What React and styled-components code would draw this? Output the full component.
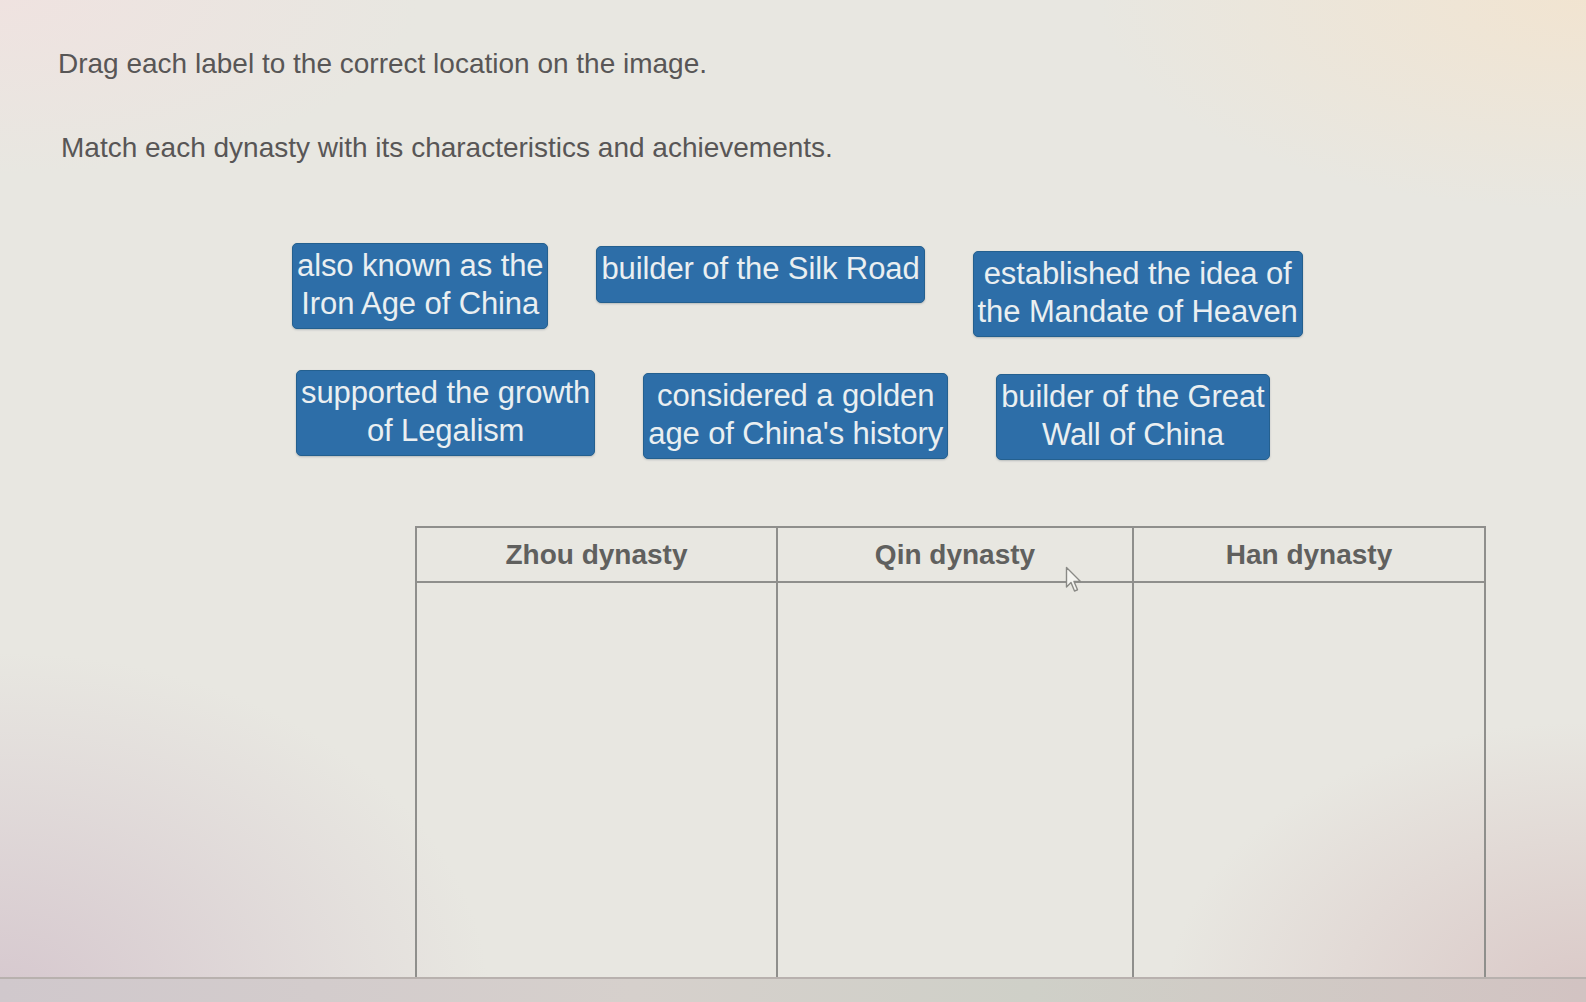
import React from "react";
import styled, { createGlobalStyle } from "styled-components";

const GlobalStyle = createGlobalStyle`
  html, body {
    margin: 0;
    padding: 0;
  }
  body {
    font-family: "Liberation Sans", Arial, sans-serif;
    background: #e8e6e0;
    overflow: hidden;
  }
`;

const Screen = styled.div`
  width: 1586px;
  height: 1002px;
  display: flex;
  flex-direction: column;
  background:
    radial-gradient(ellipse 700px 500px at 0% 100%, rgba(212, 196, 204, 0.9), rgba(212, 196, 204, 0) 70%),
    radial-gradient(ellipse 600px 400px at 100% 100%, rgba(214, 192, 192, 0.8), rgba(214, 192, 192, 0) 70%),
    radial-gradient(ellipse 700px 300px at 100% 0%, rgba(242, 228, 208, 0.95), rgba(242, 228, 208, 0) 70%),
    radial-gradient(ellipse 600px 250px at 0% 0%, rgba(240, 226, 224, 0.9), rgba(240, 226, 224, 0) 70%),
    #e8e7e1;
`;

const Page = styled.main`
  position: relative;
  height: 979px;
  flex: 0 0 979px;
  overflow: hidden;
  border-bottom: 2px solid #b8b1ae;
  box-sizing: border-box;
`;

const Prompt = styled.p`
  margin: ${(p) => p.$top}px 0 0;
  padding-left: ${(p) => p.$left}px;
  font-size: 28px;
  line-height: 31px;
  color: #585656;
`;

const LabelRow = styled.div`
  display: flex;
  align-items: flex-start;
  gap: 48px;
  margin-top: ${(p) => p.$top}px;
  padding-left: ${(p) => p.$left}px;
`;

const Label = styled.div`
  box-sizing: border-box;
  min-height: ${(p) => p.$minHeight || 0}px;
  margin-top: ${(p) => p.$shift || 0}px;
  padding: 3px 4px 5px;
  background: #2d6ea8;
  border: 1px solid #24608f;
  border-radius: 5px;
  color: #eaeff1;
  font-size: 31px;
  line-height: 38px;
  letter-spacing: -0.1px;
  text-align: center;
  white-space: pre-line;
  box-shadow: 0 1px 2px rgba(40, 60, 80, 0.25);
`;

const Board = styled.div`
  margin: 66px 0 0 415px;
  width: 1071px;
  display: grid;
  grid-template-columns: 361px 356px 1fr;
  grid-template-rows: 55px 520px;
  border-top: 2px solid #8f8f8c;
  border-left: 2px solid #8f8f8c;
  box-sizing: border-box;
`;

const HeadCell = styled.div`
  display: flex;
  align-items: center;
  justify-content: center;
  border-right: 2px solid #8f8f8c;
  border-bottom: 2px solid #8f8f8c;
  font-size: 28px;
  font-weight: bold;
  color: #60605e;
`;

const DropCell = styled.div`
  border-right: 2px solid #8f8f8c;
`;

const Cursor = styled.svg`
  position: absolute;
  left: 1065px;
  top: 566px;
  width: 18px;
  height: 28px;
`;

const Bezel = styled.div`
  flex: 1;
  background: linear-gradient(90deg, #d0c8cc 0%, #d6d0cc 40%, #cfd0c8 65%, #d2c3c2 100%);
`;

const topLabels = [
  { text: "also known as the\nIron Age of China", shift: 0 },
  { text: "builder of the Silk Road", shift: 3, minHeight: 57 },
  { text: "established the idea of\nthe Mandate of Heaven", shift: 8 },
];

const bottomLabels = [
  { text: "supported the growth\nof Legalism", shift: 0 },
  { text: "considered a golden\nage of China's history", shift: 3 },
  { text: "builder of the Great\nWall of China", shift: 4 },
];

const dynasties = ["Zhou dynasty", "Qin dynasty", "Han dynasty"];

export default function App() {
  return (
    <>
      <GlobalStyle />
      <Screen>
        <Page>
          <Prompt $top={48} $left={58}>
            Drag each label to the correct location on the image.
          </Prompt>
          <Prompt $top={53} $left={61}>
            Match each dynasty with its characteristics and achievements.
          </Prompt>

          <LabelRow $top={80} $left={292}>
            {topLabels.map((l) => (
              <Label key={l.text} $shift={l.shift} $minHeight={l.minHeight}>
                {l.text}
              </Label>
            ))}
          </LabelRow>
          <LabelRow $top={33} $left={296}>
            {bottomLabels.map((l) => (
              <Label key={l.text} $shift={l.shift}>
                {l.text}
              </Label>
            ))}
          </LabelRow>

          <Board>
            {dynasties.map((d) => (
              <HeadCell key={d}>{d}</HeadCell>
            ))}
            {dynasties.map((d) => (
              <DropCell key={d + "-drop"} />
            ))}
          </Board>

          <Cursor viewBox="0 0 18 28">
            <path
              d="M1.5 1.5 L1.5 21 L6 16.5 L9.5 25 L12.5 23.8 L9 15.5 L15.5 15.5 Z"
              fill="#f4f4f0"
              stroke="#8a8a86"
              strokeWidth="1.4"
              strokeLinejoin="round"
            />
          </Cursor>
        </Page>
        <Bezel />
      </Screen>
    </>
  );
}
